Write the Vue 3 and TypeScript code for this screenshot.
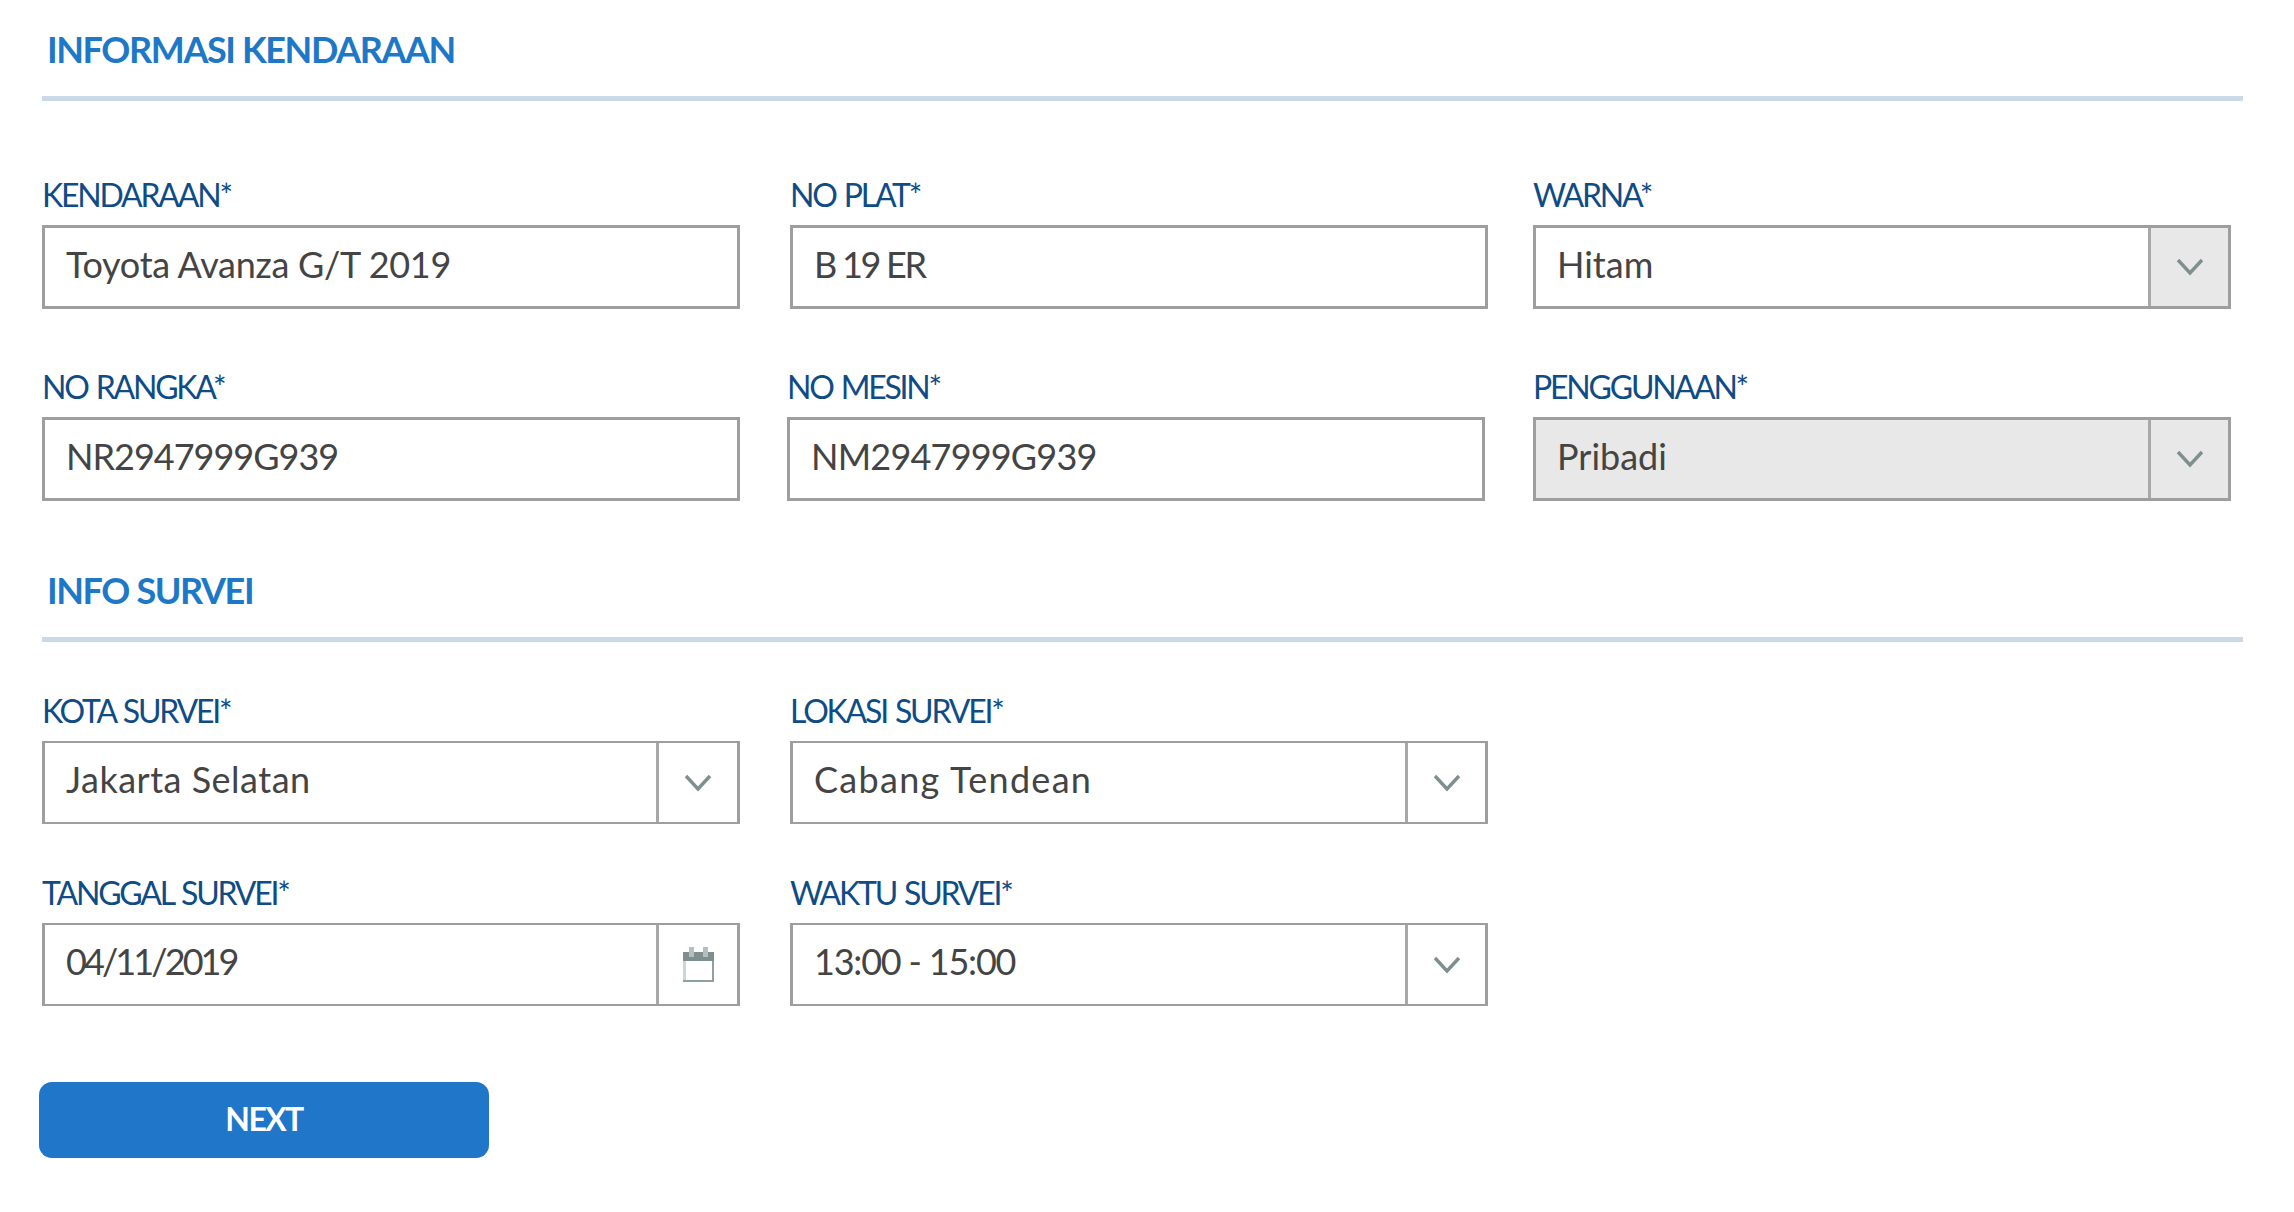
<script setup lang="ts">
type Kind = 'text' | 'select' | 'date'
interface Field {
  label: string
  value: string
  kind: Kind
  spacing?: number
  disabled?: boolean
  grey?: boolean
}
const rowA: Field[] = [
  { label: 'KENDARAAN*', value: 'Toyota Avanza G/T 2019', kind: 'text', spacing: -0.3 },
  { label: 'NO PLAT*', value: 'B 19 ER', kind: 'text', spacing: -2.3 },
  { label: 'WARNA*', value: 'Hitam', kind: 'select', grey: true },
]
const rowB: Field[] = [
  { label: 'NO RANGKA*', value: 'NR2947999G939', kind: 'text', spacing: -1 },
  { label: 'NO MESIN*', value: 'NM2947999G939', kind: 'text', spacing: -0.8 },
  { label: 'PENGGUNAAN*', value: 'Pribadi', kind: 'select', grey: true, disabled: true },
]
const rowC: Field[] = [
  { label: 'KOTA SURVEI*', value: 'Jakarta Selatan', kind: 'select', spacing: 0.5 },
  { label: 'LOKASI SURVEI*', value: 'Cabang Tendean', kind: 'select', spacing: 1.3 },
]
const rowD: Field[] = [
  { label: 'TANGGAL SURVEI*', value: '04/11/2019', kind: 'date', spacing: -2.9 },
  { label: 'WAKTU SURVEI*', value: '13:00 - 15:00', kind: 'select', spacing: -1.2 },
]
const rows = [
  { cls: 'row-a', fields: rowA },
  { cls: 'row-b', fields: rowB },
]
const lowerRows = [
  { cls: 'row-c', fields: rowC },
  { cls: 'row-d', fields: rowD },
]
</script>

<template>
  <main class="page">
    <h2 class="title first">INFORMASI KENDARAAN</h2>
    <div v-for="r in rows" :key="r.cls" class="row" :class="r.cls">
      <div v-for="f in r.fields" :key="f.label" class="field">
        <label class="label">{{ f.label }}</label>
        <div class="box" :class="{ disabled: f.disabled }">
          <span class="value" :style="{ letterSpacing: (f.spacing ?? 0) + 'px' }">{{ f.value }}</span>
          <span v-if="f.kind !== 'text'" class="addon" :class="{ grey: f.grey }">
            <svg class="chev" viewBox="0 0 28 20" width="28" height="20">
              <path d="M2 3 L14 16 L26 3" fill="none" stroke="#7f8f8f" stroke-width="3.4" />
            </svg>
          </span>
        </div>
      </div>
    </div>

    <h2 class="title second">INFO SURVEI</h2>
    <div v-for="r in lowerRows" :key="r.cls" class="row" :class="r.cls">
      <div v-for="f in r.fields" :key="f.label" class="field low">
        <label class="label">{{ f.label }}</label>
        <div class="box">
          <span class="value" :style="{ letterSpacing: (f.spacing ?? 0) + 'px' }">{{ f.value }}</span>
          <span class="addon">
            <svg v-if="f.kind === 'date'" class="cal" viewBox="0 0 31 35" width="31" height="35">
              <rect x="0" y="5" width="31" height="30" fill="#ccd6d6" />
              <rect x="3" y="14" width="26" height="19" fill="#fff" />
              <rect x="29" y="14" width="2" height="21" fill="#8fa0a0" />
              <rect x="0" y="33" width="31" height="2" fill="#8fa0a0" />
              <rect x="0" y="5" width="31" height="9" fill="#7f8f8f" />
              <rect x="6" y="0" width="5" height="10" fill="#b4bfbf" />
              <rect x="20" y="0" width="5" height="10" fill="#b4bfbf" />
            </svg>
            <svg v-else class="chev" viewBox="0 0 28 20" width="28" height="20">
              <path d="M2 3 L14 16 L26 3" fill="none" stroke="#7f8f8f" stroke-width="3.4" />
            </svg>
          </span>
        </div>
      </div>
    </div>

    <button class="next" type="button">NEXT</button>
  </main>
</template>

<style scoped>
.page {
  box-sizing: border-box;
  width: 2294px;
  height: 1212px;
  padding: 0 51px 0 42px;
  background: #fff;
  font-family: Lato, "Noto Sans", sans-serif;
  overflow: hidden;
}
.title {
  margin: 0;
  padding-left: 5px;
  color: #1e78c8;
  font-size: 36px;
  font-weight: 700;
  letter-spacing: -1.4px;
  line-height: 44px;
  border-bottom: 5px solid #cbd8e5;
}
.title.first {
  padding-top: 27px;
  padding-bottom: 25px;
}
.title.second {
  margin-top: 67px;
  padding-bottom: 25px;
}
.row {
  display: flex;
}
.row-a {
  margin-top: 82px;
}
.row-a .field:nth-child(2) {
  margin-left: 50px;
}
.row-a .field:nth-child(3) {
  margin-left: 45px;
}
.row-b {
  margin-top: 66px;
}
.row-b .field:nth-child(2) {
  margin-left: 47px;
}
.row-b .field:nth-child(3) {
  margin-left: 48px;
}
.row-c {
  margin-top: 57px;
}
.row-d {
  margin-top: 57px;
}
.row-c .field:nth-child(2),
.row-d .field:nth-child(2) {
  margin-left: 50px;
}
.field {
  width: 698px;
}
.label {
  display: block;
  height: 42px;
  color: #0f4c85;
  font-size: 32px;
  line-height: 24px;
  letter-spacing: -2.2px;
  word-spacing: 2px;
}
.box {
  box-sizing: border-box;
  display: flex;
  align-items: stretch;
  height: 84px;
  border: 3px solid #9e9e9e;
  background: #fff;
}
.field.low .box {
  height: 83px;
  border-width: 2px 3px;
}
.box.disabled {
  background: #e8e8e8;
}
.value {
  flex: 1;
  padding-left: 21px;
  color: #444;
  font-size: 36px;
  line-height: 72px;
}
.addon {
  box-sizing: border-box;
  display: flex;
  align-items: center;
  justify-content: center;
  width: 80px;
  border-left: 3px solid #a8a8a8;
}
.field.low:first-child .addon {
  width: 81px;
}
.addon.grey {
  background: #e8e8e8;
}
.next {
  display: block;
  width: 450px;
  height: 76px;
  margin: 76px 0 0 -3px;
  padding: 0 0 3px;
  border: 0;
  border-radius: 13px;
  background: #2076c8;
  color: #fff;
  font-family: inherit;
  font-size: 32px;
  font-weight: 700;
  letter-spacing: -1.6px;
}
</style>
